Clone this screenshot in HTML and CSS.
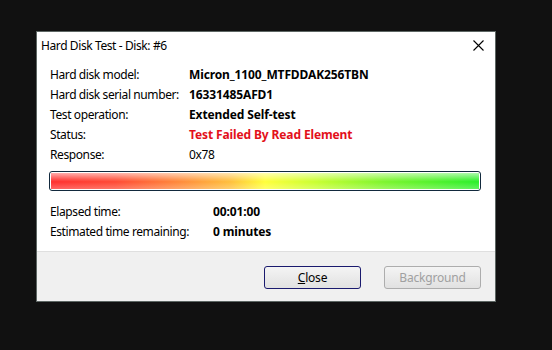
FILE: index.html
```html
<!DOCTYPE html>
<html lang="en">

<head>
  <meta charset="UTF-8">
  <meta name="viewport" content="width=device-width, initial-scale=1.0">
  <title>Hard Disk Test</title>
  <link rel="stylesheet" href="styles.css">
</head>

<body>

  <div class="window">
    <div class="titlebar">
      <span class="title">Hard Disk Test - Disk: #6</span>
      <span class="close-x">
        <svg width="11" height="11" viewBox="0 0 11 11">
          <path d="M0.5 0.5 L10.5 10.5 M10.5 0.5 L0.5 10.5" stroke="#000" stroke-width="1.1" fill="none" />
        </svg>
      </span>
    </div>

    <div class="content">
      <div class="info">
        <span>Hard disk model:</span><b>Micron_1100_MTFDDAK256TBN</b>
        <span>Hard disk serial number:</span><b>16331485AFD1</b>
        <span>Test operation:</span><b>Extended Self-test</b>
        <span>Status:</span><b class="failed">Test Failed By Read Element</b>
        <span>Response:</span><span>0x78</span>
      </div>

      <div class="progress">
        <div class="progress-fill"></div>
      </div>

      <div class="times">
        <span>Elapsed time:</span><b>00:01:00</b>
        <span>Estimated time remaining:</span><b>0 minutes</b>
      </div>
    </div>

    <div class="footer">
      <button class="btn btn-default"><u>C</u>lose</button>
      <button class="btn" disabled>Background</button>
    </div>
  </div>

</body>

</html>
```

FILE: styles.css
```css
* {
  margin: 0;
  padding: 0;
  box-sizing: border-box;
}

body {
  background: #111111;
  font-family: "Noto Sans", "Open Sans", sans-serif;
  font-size: 12px;
  letter-spacing: -0.4px;
  color: #000;
  overflow: hidden;
}

.window {
  width: 460px;
  height: 271px;
  margin: 31px 0 0 36px;
  background: #fff;
  border: 1px solid #5d6663;
  display: flex;
  flex-direction: column;
}

.titlebar {
  height: 26px;
  display: flex;
  align-items: center;
  justify-content: space-between;
  padding: 0 11px 0 4px;
}

.close-x {
  display: flex;
}

.content {
  flex: 1;
  padding: 6px 14px 0 12px;
}

.info,
.times {
  display: grid;
  grid-template-columns: 139px auto;
  grid-auto-rows: 20px;
  align-items: center;
  padding-left: 1px;
}

.times {
  grid-template-columns: 163px auto;
  margin-top: 10px;
}

.info b,
.times b {
  font-weight: bold;
  letter-spacing: -0.12px;
}

.failed {
  color: #e3101a;
}

/* --------進度條--------- */
.progress {
  margin-top: 7px;
  height: 20px;
  border: 1px solid #12293d;
  border-radius: 3px;
  padding: 1px;
  background: #fff;
}

.progress-fill {
  height: 100%;
  background:
    linear-gradient(to bottom, rgba(255, 255, 255, 0.6) 0%, rgba(255, 255, 255, 0.15) 40%, rgba(255, 255, 255, 0) 55%, rgba(255, 255, 255, 0.25) 100%),
    linear-gradient(to right, #ff2f2f 0%, #ff4a34 15%, #ff8a3a 30%, #ffc03c 42%, #ffff3a 50%, #c8ff30 62%, #7cf52c 78%, #2aef2a 100%);
}

/* --------按鈕--------- */
.footer {
  height: 50px;
  background: #f0f0f0;
  border-top: 1px solid #dfdfdf;
  display: flex;
  justify-content: flex-end;
  gap: 23px;
  padding: 14px 14px 0 0;
}

.btn {
  width: 97px;
  height: 23px;
  font-family: inherit;
  font-size: 12px;
  letter-spacing: -0.2px;
  border: 1px solid #adadad;
  border-radius: 3px;
  background: linear-gradient(to bottom, #f4f4f4, #e1e1e1);
  color: #a0a0a0;
}

.btn-default {
  border-color: #1a1a6e;
  color: #000;
}
```
